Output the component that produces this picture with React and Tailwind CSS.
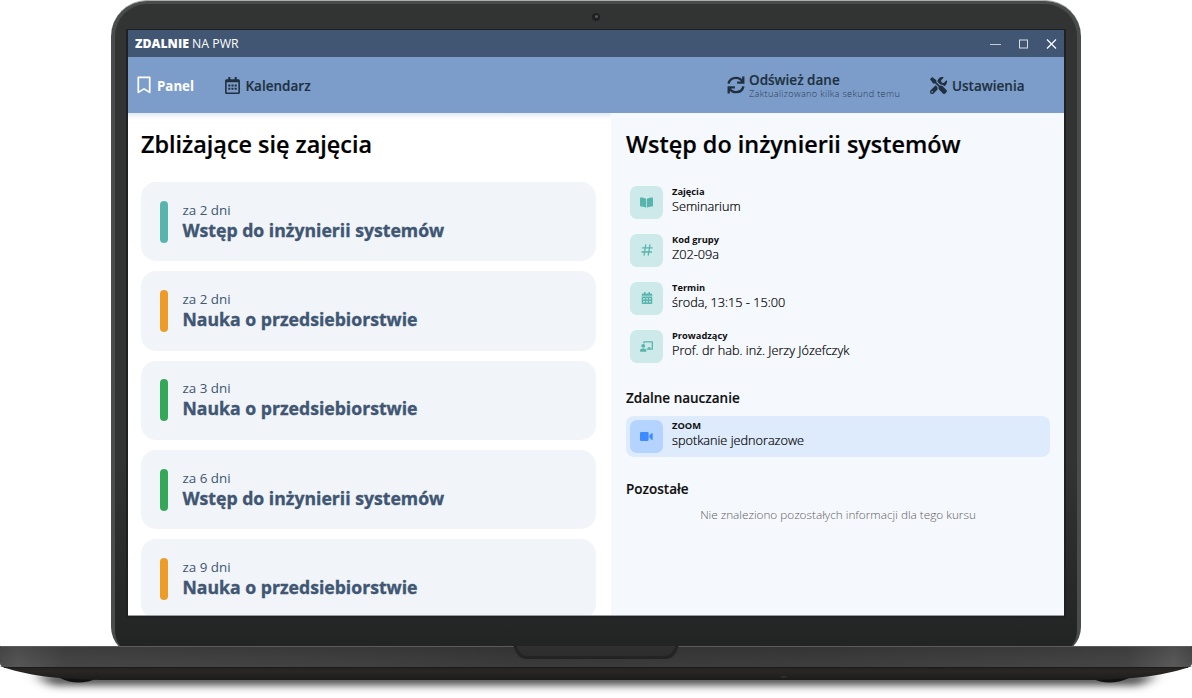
import {
  FaBookOpen,
  FaCalendarAlt,
  FaChalkboardTeacher,
  FaRegCalendarAlt,
  FaTools,
} from "react-icons/fa";

const classes = [
  { when: "za 2 dni", name: "Wstęp do inżynierii systemów", bar: "bg-[#58b5ad]" },
  { when: "za 2 dni", name: "Nauka o przedsiebiorstwie", bar: "bg-[#ec9c27]" },
  { when: "za 3 dni", name: "Nauka o przedsiebiorstwie", bar: "bg-[#34a858]" },
  { when: "za 6 dni", name: "Wstęp do inżynierii systemów", bar: "bg-[#34a858]" },
  { when: "za 9 dni", name: "Nauka o przedsiebiorstwie", bar: "bg-[#ec9c27]" },
];

function HashIcon() {
  return (
    <svg width="12" height="12" viewBox="0 0 12 12" fill="none" stroke="currentColor" strokeWidth="1.3" strokeLinecap="round">
      <path d="M4.7 1 3.1 11M8.9 1 7.3 11M1.5 3.9h9.6M.9 8h9.6" />
    </svg>
  );
}

function VideoIcon() {
  return (
    <svg width="13" height="9" viewBox="0 0 13 9" fill="currentColor">
      <rect width="8.6" height="9" rx="1.2" />
      <path d="M9.3 3.4 11.6 1.2Q12.7.5 12.7 1.8v5.4q0 1.3-1.1.6L9.3 5.6z" />
    </svg>
  );
}

function RefreshIcon() {
  return (
    <svg width="18" height="18" viewBox="0 0 18 18" fill="none" stroke="currentColor" strokeWidth="2.3">
      <path d="M1.5 7.6C2.4 4 5.4 1.8 9 1.8c2.8 0 5 1.4 6.6 3.7M16.3.6v6.1h-6.2" />
      <path d="M16.5 10.4c-.9 3.6-3.9 5.8-7.5 5.8-2.8 0-5-1.4-6.6-3.7M1.7 17.4v-6.1h6.2" />
    </svg>
  );
}

const details = [
  { label: "Zajęcia", value: "Seminarium", icon: <FaBookOpen size={13} /> },
  { label: "Kod grupy", value: "Z02-09a", icon: <HashIcon /> },
  { label: "Termin", value: "środa, 13:15 - 15:00", icon: <FaCalendarAlt size={12} /> },
  { label: "Prowadzący", value: "Prof. dr hab. inż. Jerzy Józefczyk", icon: <FaChalkboardTeacher size={13} /> },
];

function Detail({ icon, label, value, tile = "bg-[#cee9e9] text-[#58b5ad]" }) {
  return (
    <div className="flex h-[33px] items-center">
      <div className={`flex size-[33px] items-center justify-center rounded-[7px] ${tile}`}>{icon}</div>
      <div className="-mt-[6px] ml-[9px]">
        <div className="text-[9.3px] leading-[13px] font-bold">{label}</div>
        <div className="text-[12.7px] leading-[16px] font-light text-black [-webkit-text-stroke:0.2px]">{value}</div>
      </div>
    </div>
  );
}

function TitleBar() {
  return (
    <div className="flex h-[27px] shrink-0 items-center bg-[#405673] pr-[7px] pl-[7px] text-white">
      <div className="pt-[2px] text-[12.3px]">
        <span className="font-extrabold">ZDALNIE</span> NA PWR
      </div>
      <svg className="ml-auto" width="68" height="12" viewBox="0 0 68 12" fill="none" stroke="white">
        <path d="M1 6.5h11" strokeOpacity=".7" />
        <rect x="30.5" y="2" width="8" height="8" strokeOpacity=".8" />
        <path d="m58 1.5 9 9m0-9-9 9" strokeWidth="1.2" />
      </svg>
    </div>
  );
}

function NavBar() {
  return (
    <nav className="relative flex h-[56.4px] shrink-0 items-center bg-[#7c9dca] pl-[8px] text-[13.5px] font-semibold text-[#20303f]">
      <div className="flex w-[88px] items-center gap-[4px] text-[13.3px] font-bold text-white">
        <svg width="17" height="18" viewBox="0 0 17 18" fill="none" stroke="currentColor" strokeWidth="1.7">
          <path d="M2.3 1.4h11.4v15L8 12.9l-5.7 3.5z" strokeLinejoin="round" />
        </svg>
        <span className="pt-[3px]">Panel</span>
      </div>
      <div className="flex items-center gap-[4.5px]">
        <FaRegCalendarAlt size={17} />
        <span className="pt-[2px] [-webkit-text-stroke:0.15px]">Kalendarz</span>
      </div>
      <div className="ml-auto flex w-[203px] items-center gap-[4px]">
        <RefreshIcon />
        <div className="pt-[3px]">
          <div className="leading-[14px] [-webkit-text-stroke:0.15px]">Odśwież dane</div>
          <div className="text-[9.2px] leading-[14px] font-light tracking-[0.32px] whitespace-nowrap text-[#2b3b4e]">Zaktualizowano kilka sekund temu</div>
        </div>
      </div>
      <div className="flex w-[134px] items-center gap-[5px]">
        <FaTools size={17} />
        <span className="pt-[2px] [-webkit-text-stroke:0.15px]">Ustawienia</span>
      </div>
    </nav>
  );
}

function UpcomingClasses() {
  return (
    <section className="w-[483px] shrink-0 overflow-hidden bg-white bg-linear-to-b from-[#e3e9f3] to-white to-[6px] px-[13px] pt-[14.4px]">
      <h1 className="h-[54.2px] text-[23.4px] leading-[32px] font-semibold text-black [-webkit-text-stroke:0.2px]">Zbliżające się zajęcia</h1>
      <div className="flex w-[455px] flex-col gap-[9.8px]">
        {classes.map((item, i) => (
          <div key={i} className="flex h-[79.5px] shrink-0 items-center rounded-[15px] bg-[#f1f4f8] pl-[19px] text-[#405673]">
            <div className={`h-[42px] w-2 rounded-full ${item.bar}`} />
            <div className="-mt-[2px] ml-[14.5px]">
              <div className="text-[13.4px] leading-[19px]">{item.when}</div>
              <div className="text-[17.65px] leading-[21px] font-bold [-webkit-text-stroke:0.35px]">{item.name}</div>
            </div>
          </div>
        ))}
      </div>
    </section>
  );
}

function ClassDetails() {
  return (
    <section className="flex grow flex-col bg-[#f5f8fd] pr-[14px] pl-[15px] pt-[14.4px] text-[#101010]">
      <h2 className="h-[58px] text-[23.4px] leading-[32px] font-semibold text-black [-webkit-text-stroke:0.2px]">Wstęp do inżynierii systemów</h2>
      <div className="flex flex-col gap-[15px] pl-[4px]">
        {details.map((d) => (
          <Detail key={d.label} {...d} />
        ))}
      </div>
      <h3 className="mt-[25px] text-[13.5px] leading-[20px] font-semibold [-webkit-text-stroke:0.15px]">Zdalne nauczanie</h3>
      <div className="mt-[8px] w-[424px] rounded-[8px] bg-[#deebfd] p-[4px]">
        <Detail icon={<VideoIcon />} label="ZOOM" value="spotkanie jednorazowe" tile="bg-[#b5d3ff] text-[#3d8bff]" />
      </div>
      <h3 className="mt-[22px] text-[13.5px] leading-[20px] font-semibold [-webkit-text-stroke:0.15px]">Pozostałe</h3>
      <p className="mt-[7px] text-center text-[11.75px] leading-[17px] font-light text-[#606060]">
        Nie znaleziono pozostałych informacji dla tego kursu
      </p>
    </section>
  );
}

function LaptopBase() {
  return (
    <svg className="block h-[52px] w-[1192px]" viewBox="0 0 1192 52" fill="none">
      <defs>
        <linearGradient id="deck" x2="1192" gradientUnits="userSpaceOnUse">
          <stop stopColor="#505050" />
          <stop offset=".015" stopColor="#5b5b5b" />
          <stop offset=".055" stopColor="#464646" />
          <stop offset=".3" stopColor="#404040" />
          <stop offset=".45" stopColor="#383838" />
          <stop offset=".7" stopColor="#3c3c3c" />
          <stop offset=".945" stopColor="#464646" />
          <stop offset=".985" stopColor="#5f5f5f" />
          <stop offset="1" stopColor="#505050" />
        </linearGradient>
        <linearGradient id="shade" x2="0" y2="1">
          <stop stopColor="#222" stopOpacity=".3" />
          <stop offset="1" stopColor="#444" stopOpacity=".2" />
        </linearGradient>
        <linearGradient id="under" x2="0" y2="1">
          <stop stopColor="#222" />
          <stop offset=".4" stopColor="#282724" />
          <stop offset="1" stopColor="#1b1b1b" />
        </linearGradient>
        <linearGradient id="notch" x2="0" y2="1">
          <stop stopColor="#303030" />
          <stop offset=".7" stopColor="#2d2d2d" />
          <stop offset="1" stopColor="#222" />
        </linearGradient>
        <filter id="blur" x="-10%" y="-200%" width="120%" height="500%">
          <feGaussianBlur stdDeviation="7 4" />
        </filter>
      </defs>
      <path d="M35 28H1157L1140 39H52z" fill="#000" fillOpacity=".75" filter="url(#blur)" />
      <path d="M60 32q18 9 38 0v-5H60zM1091 32q18 9 38 0v-5h-38z" fill="#111" />
      <path d="M0 20h1192c-25 9-58 14-110 14H110C58 34 25 29 0 20" fill="url(#under)" />
      <path d="M0 0h1192v17q0 3-4 4H4q-4-1-4-4z" fill="url(#deck)" />
      <path d="M0 0h1192v17q0 3-4 4H4q-4-1-4-4z" fill="url(#shade)" />
      <path d="M1 .5h1190" stroke="#5c5c5c" />
      <path d="M4 21.5h1184" stroke="#1b1b1b" />
      <path d="M513 0h166q-4 13-13 13H526Q517 13 513 0" fill="url(#notch)" />
      <path d="M515 0q4 11.5 12 11.5h138q8 0 12-11.5" stroke="#232323" strokeWidth="2.5" />
      <path d="M781 31h6" stroke="#303030" strokeWidth="1.5" />
    </svg>
  );
}

export default function App() {
  return (
    <div className="h-[698px] w-[1192px] overflow-hidden bg-white font-['Open_Sans',sans-serif]">
      <div className="mx-auto h-[646px] w-[970px] overflow-hidden">
        <div className="flex h-[655px] flex-col items-center rounded-t-[36px] rounded-b-[28px] border-t border-t-[#aaaeac] bg-[#4a4b4b] px-[4px] pt-[3px]">
          <div className="flex h-full w-full flex-col items-center rounded-t-[32px] rounded-b-[24px] bg-linear-to-b from-[#323433] from-70% to-[#222323]">
            <div className="flex h-[25px] shrink-0 items-center">
              <div className="flex size-[8px] items-center justify-center rounded-full bg-[#202020]">
                <div className="size-[3px] rounded-full bg-[#555b62]" />
              </div>
            </div>
            <div className="flex h-[589px] w-[940px] shrink-0 flex-col border-2 border-t-1 border-[#1e2022] bg-[#1e2022]">
              <TitleBar />
              <NavBar />
              <main className="flex min-h-0 grow border-r border-b border-[#9a9c9f]">
                <UpcomingClasses />
                <ClassDetails />
              </main>
            </div>
          </div>
        </div>
      </div>
      <LaptopBase />
    </div>
  );
}
